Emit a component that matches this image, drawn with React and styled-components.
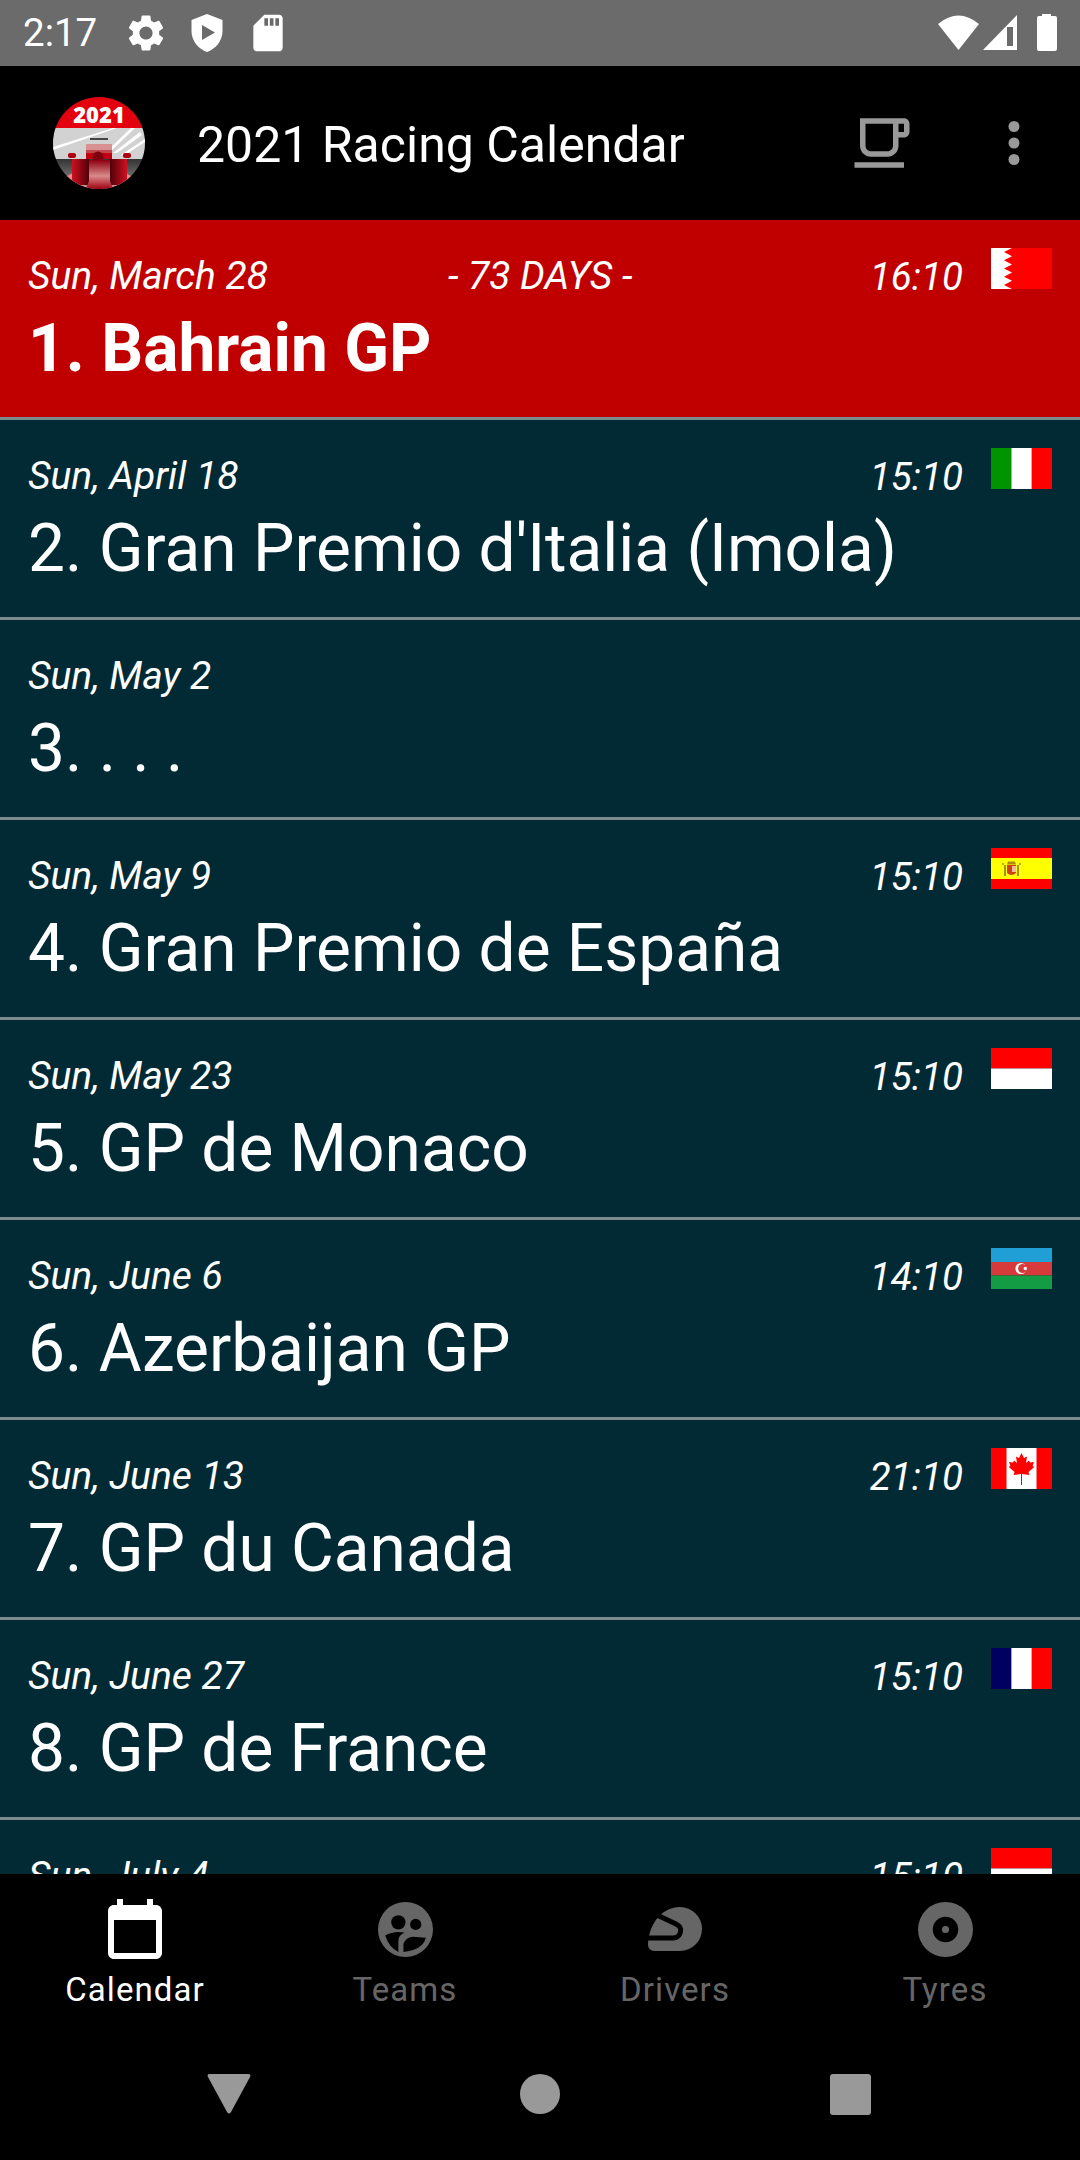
import React from 'react';
import styled, { createGlobalStyle } from 'styled-components';

const Global = createGlobalStyle`
  html, body { margin: 0; padding: 0; background: #000; }
  * { box-sizing: border-box; }
`;

const Phone = styled.div`
  width: 1080px; height: 2160px; display: flex; flex-direction: column;
  background: #000; overflow: hidden; font-family: Roboto, "Liberation Sans", sans-serif; color: #fff;
`;
const StatusBar = styled.div`
  height: 66px; flex: none; background: #6b6b6b; display: flex; align-items: center; padding: 0 22px 0 23px;
`;
const Clock = styled.span`font-size: 38.5px; width: 73px; margin-right: 28px; line-height: 1;`;
const StatusLeft = styled.div`display: flex; align-items: center; gap: 17px; flex: 1;`;
const StatusRight = styled.div`display: flex; align-items: center;`;
const AppBar = styled.header`
  height: 154px; flex: none; background: #000; display: flex; align-items: center; padding-left: 53px;
`;
const AppTitle = styled.h1`
  flex: 1; margin: 4px 0 0 52px; font-size: 50px; font-weight: 400; letter-spacing: 0; white-space: nowrap;
`;
const ActionButton = styled.div`
  width: 132px; height: 154px; display: flex; align-items: center; justify-content: center;
`;
const List = styled.main`flex: 1; min-height: 0; overflow: hidden;`;
const Row = styled.article`
  height: 200px; padding: 28px 28px 0 28px; border-bottom: 3px solid #7d8a8b;
  background: ${p => (p.$next ? '#c00000' : '#022a34')};
`;
const RowTop = styled.div`
  position: relative; display: flex; align-items: flex-start; height: 41px;
`;
const DateText = styled.span`flex: 1; font-size: 39px; font-style: italic; line-height: 57px; height: 41px;`;
const Countdown = styled.span`
  position: absolute; left: 420px; font-size: 39px; font-style: italic; line-height: 57px; height: 41px; white-space: nowrap;
`;
const TimeText = styled.span`font-size: 38.5px; font-style: italic; line-height: 57px; height: 41px; margin-right: 28px;`;
const FlagBox = styled.div`width: 61px; height: 41px; flex: none;`;
const FlagSvg = styled.svg`display: block; width: 61px; height: 41px;`;
const RowTitle = styled.h2`
  margin: 21px 0 0; font-size: 65.8px; line-height: 78px; white-space: nowrap;
  font-weight: ${p => (p.$next ? 700 : 400)};
`;
const TabBar = styled.nav`
  height: 142px; flex: none; display: grid; grid-template-columns: repeat(4, 270px); background: #000;
`;
const Tab = styled.div`
  display: flex; flex-direction: column; align-items: center; padding-top: 19px;
  color: ${p => (p.$active ? '#fff' : '#666')};
`;
const TabIcon = styled.div`
  width: 72px; height: 72px; display: flex; align-items: center; justify-content: center;
`;
const TabLabel = styled.span`
  font-size: 33px; line-height: 40px; letter-spacing: 1.1px; margin-top: 5px;
`;
const NavBar = styled.div`
  height: 144px; flex: none; display: grid; grid-template-columns: repeat(3, 311px); justify-content: center; align-items: center;
`;
const NavSlot = styled.div`display: flex; justify-content: center; align-items: center; padding-top: 12px; margin-left: -1px;`;

const Flag = ({ code }) => {
  const wrap = c => <FlagSvg viewBox="0 0 61 41">{c}</FlagSvg>;
  switch (code) {
    case 'bh':
      return wrap(<>
        <rect width="61" height="41" fill="#f00" />
        <path d="M0 0H21L13 4.1 21 8.2 13 12.3 21 16.4 13 20.500 21 24.600 13 28.700 21 32.800 13 36.900 21 41H0Z" fill="#fff" />
      </>);
    case 'it':
      return wrap(<>
        <rect width="20.4" height="41" fill="#009400" />
        <rect x="20.4" width="20.4" height="41" fill="#fff" />
        <rect x="40.8" width="20.2" height="41" fill="#f00" />
      </>);
    case 'es':
      return wrap(<>
        <rect width="61" height="41" fill="#f00" />
        <rect y="10" width="61" height="21" fill="#ff0" />
        <rect x="13" y="17" width="2" height="11" fill="#a89020" />
        <rect x="26" y="17" width="2" height="11" fill="#a89020" />
        <path d="M17 13.500h7l1 3h-9z" fill="#b08a10" />
        <path d="M16 17h9v8q-4.500 4-9 0z" fill="#d04010" />
        <rect x="21" y="18" width="4" height="6" fill="#eeb8a8" />
        <circle cx="12" cy="16" r="1" fill="#a89020" />
        <circle cx="29" cy="16" r="1" fill="#a89020" />
      </>);
    case 'mc':
      return wrap(<>
        <rect width="61" height="20.5" fill="#f00" />
        <rect y="20.5" width="61" height="20.5" fill="#fff" />
      </>);
    case 'az':
      return wrap(<>
        <rect width="61" height="14" fill="#1f9fd6" />
        <rect y="14" width="61" height="13.5" fill="#d63a3a" />
        <rect y="27.5" width="61" height="13.5" fill="#139c43" />
        <circle cx="30" cy="20.5" r="5.6" fill="#fff" />
        <circle cx="31.6" cy="20.5" r="4.5" fill="#d63a3a" />
        <circle cx="34.3" cy="20.5" r="1.7" fill="#fff" />
      </>);
    case 'ca':
      return wrap(<>
        <rect width="61" height="41" fill="#f00" />
        <rect x="15.5" width="30" height="41" fill="#fff" />
        <path d="M30.500 5 33 10 36 8.600 35 15 38 12.400 39 14.600 43 14 41.600 18 43.200 19 37.500 24 38.400 27 31 26 31 37H30V26L22.600 27 23.500 24 17.800 19 19.400 18 18 14 22 14.600 23 12.400 26 15 25 8.600 28 10Z" fill="#f00" />
      </>);
    case 'fr':
      return wrap(<>
        <rect width="20.4" height="41" fill="#000060" />
        <rect x="20.4" width="20.4" height="41" fill="#fff" />
        <rect x="40.8" width="20.2" height="41" fill="#f00" />
      </>);
    default:
      return null;
  }
};

const races = [
  { date: 'Sun, March 28', time: '16:10', flag: 'bh', title: '1. Bahrain GP', next: true, days: '- 73 DAYS -' },
  { date: 'Sun, April 18', time: '15:10', flag: 'it', title: "2. Gran Premio d'Italia (Imola)" },
  { date: 'Sun, May 2', title: '3. . . .' },
  { date: 'Sun, May 9', time: '15:10', flag: 'es', title: '4. Gran Premio de España' },
  { date: 'Sun, May 23', time: '15:10', flag: 'mc', title: '5. GP de Monaco' },
  { date: 'Sun, June 6', time: '14:10', flag: 'az', title: '6. Azerbaijan GP' },
  { date: 'Sun, June 13', time: '21:10', flag: 'ca', title: '7. GP du Canada' },
  { date: 'Sun, June 27', time: '15:10', flag: 'fr', title: '8. GP de France' },
  { date: 'Sun, July 4', time: '15:10', flag: 'mc' },
];

const Logo = () => (
  <svg width="92" height="92" viewBox="0 0 92 92">
    <defs>
      <clipPath id="lc"><circle cx="46" cy="46" r="46" /></clipPath>
      <linearGradient id="ground" x1="0" y1="0" x2="0" y2="1">
        <stop offset="0" stopColor="#333" /><stop offset="1" stopColor="#999" />
      </linearGradient>
      <linearGradient id="body" x1="0" y1="0" x2="0" y2="1">
        <stop offset="0" stopColor="#8c0010" /><stop offset="0.55" stopColor="#d98a8a" /><stop offset="1" stopColor="#a00010" />
      </linearGradient>
      <linearGradient id="tyreL" x1="0" y1="0" x2="1" y2="0">
        <stop offset="0" stopColor="#d01020" /><stop offset="1" stopColor="#500008" />
      </linearGradient>
      <linearGradient id="tyreR" x1="0" y1="0" x2="1" y2="0">
        <stop offset="0" stopColor="#500008" /><stop offset="1" stopColor="#d01020" />
      </linearGradient>
    </defs>
    <g clipPath="url(#lc)">
      <rect width="92" height="31" fill="#e3000f" />
      <rect y="31" width="92" height="31" fill="#d2d2d2" />
      <path d="M0 50 L60 31 H64 L0 53Z M52 56 L78 31 H82 L56 56Z M60 56 L87 35 L89 38 L64 56Z M68 58 L92 42 V45 L72 58Z" fill="#fff" />
      <rect y="62" width="92" height="30" fill="url(#ground)" />
      <path d="M12 80 L20 76 L36 92 H14Z M80 80 L72 76 L56 92 H78Z" fill="#e88" />
      <rect x="33" y="47" width="26" height="6" fill="#d89090" />
      <rect x="33" y="53" width="26" height="3" fill="#c04850" />
      <rect x="37" y="41" width="18" height="2" fill="#444" />
      <rect x="15" y="56" width="8" height="5" rx="2" fill="#b00010" />
      <rect x="70" y="56" width="8" height="5" rx="2" fill="#b00010" />
      <rect x="19" y="62" width="17" height="26" fill="url(#tyreL)" />
      <rect x="57" y="62" width="17" height="26" fill="url(#tyreR)" />
      <rect x="33" y="56" width="26" height="6" fill="#c00010" />
      <circle cx="45" cy="60" r="5.5" fill="#800010" />
      <path d="M36 63 H57 V84 L60 92 H33 L36 84Z" fill="url(#body)" />
      <text x="46" y="26" textAnchor="middle" fontFamily="Open Sans, sans-serif" fontWeight="800" fontSize="22" fill="#fff">2021</text>
    </g>
  </svg>
);

export default function App() {
  return (
    <Phone>
      <Global />
      <StatusBar>
        <Clock>2:17</Clock>
        <StatusLeft>
          <svg width="44" height="44" viewBox="0 0 24 24" fill="#fff"><path d="M19.14 12.94c.04-.3.06-.61.06-.94 0-.32-.02-.64-.07-.94l2.03-1.58c.18-.14.23-.41.12-.61l-1.92-3.32c-.12-.22-.37-.29-.59-.22l-2.39.96c-.5-.38-1.03-.7-1.62-.94l-.36-2.54c-.04-.24-.24-.41-.48-.41h-3.84c-.24 0-.43.17-.47.41l-.36 2.54c-.59.24-1.13.57-1.62.94l-2.39-.96c-.22-.08-.47 0-.59.22L2.74 8.87c-.12.21-.08.47.12.61l2.03 1.58c-.05.3-.09.63-.09.94s.02.64.07.94l-2.03 1.58c-.18.14-.23.41-.12.61l1.92 3.32c.12.22.37.29.59.22l2.39-.96c.5.38 1.03.7 1.62.94l.36 2.54c.05.24.24.41.48.41h3.84c.24 0 .44-.17.47-.41l.36-2.54c.59-.24 1.13-.56 1.62-.94l2.39.96c.22.08.47 0 .59-.22l1.92-3.32c.12-.22.07-.47-.12-.61l-2.01-1.58zM12 15.6c-1.98 0-3.6-1.62-3.6-3.6s1.62-3.6 3.6-3.6 3.6 1.62 3.6 3.6-1.62 3.6-3.6 3.6z" /></svg>
          <svg width="44" height="44" viewBox="0 0 44 44" fill="#fff"><path fillRule="evenodd" d="M22 3 L37.5 9 V20 C37.5 30 30.5 38 22 41 C13.5 38 6.5 30 6.5 20 V9 Z M17 14 V29 L30 21.5 Z" /></svg>
          <svg width="44" height="44" viewBox="0 0 24 24" fill="#fff"><path d="M18 2h-8L4.02 8 4 20c0 1.1.9 2 2 2h12c1.1 0 2-.9 2-2V4c0-1.1-.9-2-2-2zm-6 6h-2V4h2v4zm3 0h-2V4h2v4zm3 0h-2V4h2v4z" /></svg>
        </StatusLeft>
        <StatusRight>
          <svg width="120" height="40" viewBox="0 0 120 40" fill="#fff">
            <path d="M0 11 Q20.500 -6 41 11 L20.500 37Z" />
            <path fillRule="evenodd" d="M45 37 L79 2 V37Z M69 14 V33 H75 V14Z" />
            <path d="M99 5 a2 2 0 0 1 2 -2 h3 V1 h9 v2 h4 a2 2 0 0 1 2 2 v31 a2 2 0 0 1 -2 2 h-16 a2 2 0 0 1 -2 -2Z" />
          </svg>
        </StatusRight>
      </StatusBar>
      <AppBar>
        <Logo />
        <AppTitle>2021 Racing Calendar</AppTitle>
        <ActionButton>
          <svg width="66" height="66" viewBox="0 0 24 24" fill="#999"><path d="M20 3H4v10c0 2.21 1.79 4 4 4h6c2.21 0 4-1.79 4-4v-3h2c1.11 0 2-.9 2-2V5c0-1.11-.89-2-2-2zm-4 10c0 1.1-.9 2-2 2H8c-1.1 0-2-.9-2-2V5h10v8zm4-5h-2V5h2v3zM2 19h18v2H2z" /></svg>
        </ActionButton>
        <ActionButton>
          <svg width="66" height="66" viewBox="0 0 24 24" fill="#999"><circle cx="12" cy="6" r="2" /><circle cx="12" cy="12" r="2" /><circle cx="12" cy="18" r="2" /></svg>
        </ActionButton>
      </AppBar>
      <List>
        {races.map(r => (
          <Row key={r.date} $next={r.next}>
            <RowTop>
              <DateText>{r.date}</DateText>
              {r.days && <Countdown>{r.days}</Countdown>}
              {r.time && <TimeText>{r.time}</TimeText>}
              {r.flag && <FlagBox><Flag code={r.flag} /></FlagBox>}
            </RowTop>
            {r.title && <RowTitle $next={r.next}>{r.title}</RowTitle>}
          </Row>
        ))}
      </List>
      <TabBar>
        <Tab $active>
          <TabIcon>
            <svg width="72" height="72" viewBox="0 -1 24 24" fill="currentColor"><path d="M19 3h-1V1h-2v2H8V1H6v2H5c-1.11 0-1.99.9-1.99 2L3 19c0 1.1.89 2 2 2h14c1.1 0 2-.9 2-2V5c0-1.1-.9-2-2-2zm0 16H5V8h14v11z" /></svg>
          </TabIcon>
          <TabLabel>Calendar</TabLabel>
        </Tab>
        <Tab>
          <TabIcon>
            <svg width="55" height="55" viewBox="0 0 54 54">
              <circle cx="27" cy="27" r="27" fill="currentColor" />
              <circle cx="20" cy="20" r="7" fill="#000" />
              <circle cx="37" cy="22" r="5.5" fill="#000" />
              <path d="M7 33 Q15 28 26 30 Q20 33 20 38 L20 49 Q11 45 7 33Z" fill="#000" />
              <path d="M25 49 L25 41 Q27 35 34 34 L47 35 Q44 47 25 49Z" fill="#000" />
            </svg>
          </TabIcon>
          <TabLabel>Teams</TabLabel>
        </Tab>
        <Tab>
          <TabIcon>
            <svg width="54" height="44" viewBox="0 0 54 44">
              <path d="M0 38 C0 20 12 0 32 0 A22 22 0 0 1 32 44 H6 A6 6 0 0 1 0 38Z" fill="currentColor" />
              <path d="M9 8 L28 17 Q34 20 32.500 25 Q31 31 25 31 H0" fill="none" stroke="#000" strokeWidth="5" />
            </svg>
          </TabIcon>
          <TabLabel>Drivers</TabLabel>
        </Tab>
        <Tab>
          <TabIcon>
            <svg width="55" height="55" viewBox="0 0 54 54">
              <circle cx="27" cy="27" r="27" fill="currentColor" />
              <circle cx="27" cy="27" r="12.5" fill="#000" />
              <circle cx="27" cy="27" r="3.5" fill="currentColor" />
            </svg>
          </TabIcon>
          <TabLabel>Tyres</TabLabel>
        </Tab>
      </TabBar>
      <NavBar>
        <NavSlot>
          <svg width="44" height="40" viewBox="0 0 44 40" fill="#999"><path d="M3 0 H41 Q44.500 0 43 3 L24 38 Q22 41 20 38 L1 3 Q-0.500 0 3 0Z" /></svg>
        </NavSlot>
        <NavSlot>
          <svg width="40" height="40" viewBox="0 0 40 40" fill="#999"><circle cx="20" cy="20" r="20" /></svg>
        </NavSlot>
        <NavSlot>
          <svg width="41" height="41" viewBox="0 0 41 41" fill="#999"><rect width="41" height="41" rx="3" /></svg>
        </NavSlot>
      </NavBar>
    </Phone>
  );
}
